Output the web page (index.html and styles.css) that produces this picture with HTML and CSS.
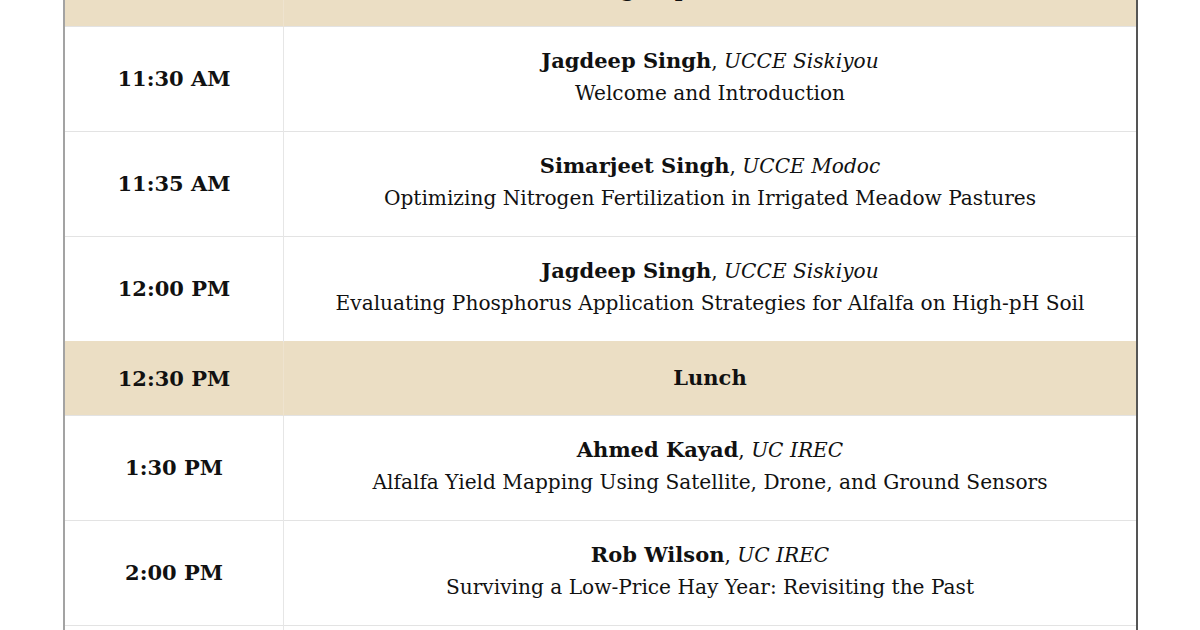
FILE: index.html
```html
<!DOCTYPE html>
<html lang="en">
<head>
<meta charset="utf-8">
<title>Agenda</title>
<link rel="stylesheet" href="styles.css">
</head>
<body>
<div class="page">
  <table class="agenda">
    <tbody>
      <tr class="break first">
        <td class="time"></td>
        <td class="talk"><strong>Sign-up and Coffee</strong></td>
      </tr>
      <tr>
        <td class="time">11:30 AM</td>
        <td class="talk"><strong>Jagdeep Singh</strong>, <em>UCCE Siskiyou</em><br>Welcome and Introduction</td>
      </tr>
      <tr>
        <td class="time">11:35 AM</td>
        <td class="talk"><strong>Simarjeet Singh</strong>, <em>UCCE Modoc</em><br>Optimizing Nitrogen Fertilization in Irrigated Meadow Pastures</td>
      </tr>
      <tr>
        <td class="time">12:00 PM</td>
        <td class="talk"><strong>Jagdeep Singh</strong>, <em>UCCE Siskiyou</em><br>Evaluating Phosphorus Application Strategies for Alfalfa on High-pH Soil</td>
      </tr>
      <tr class="break">
        <td class="time">12:30 PM</td>
        <td class="talk"><strong>Lunch</strong></td>
      </tr>
      <tr>
        <td class="time">1:30 PM</td>
        <td class="talk"><strong>Ahmed Kayad</strong>, <em>UC IREC</em><br>Alfalfa Yield Mapping Using Satellite, Drone, and Ground Sensors</td>
      </tr>
      <tr>
        <td class="time">2:00 PM</td>
        <td class="talk"><strong>Rob Wilson</strong>, <em>UC IREC</em><br>Surviving a Low-Price Hay Year: Revisiting the Past</td>
      </tr>
      <tr>
        <td class="time">2:30 PM</td>
        <td class="talk"><strong>Panel Discussion</strong>, <em>All Speakers</em><br>Questions and Answers</td>
      </tr>
    </tbody>
  </table>
</div>
</body>
</html>
```

FILE: styles.css
```css
html, body {
  margin: 0;
  padding: 0;
  background: #ffffff;
}

body {
  font-family: "DejaVu Serif", Georgia, serif;
  color: #111111;
  overflow: hidden;
}

.page {
  padding: 0 62px 0 63px;
  margin-top: -48px;
}

.agenda {
  width: 100%;
  border-collapse: collapse;
  border-left: 2px solid #a3a3a3;
  border-right: 2px solid #555555;
  font-size: 20.15px;
  line-height: 31.5px;
}

.agenda td {
  height: 64px;
  padding: 20px 12px;
  text-align: center;
  vertical-align: middle;
  border-top: 1px solid #e3e3e3;
  box-sizing: content-box;
}

.agenda td.talk {
  padding-top: 18px;
  padding-bottom: 22px;
}

.agenda tr.break td {
  height: 33px;
  padding-top: 20px;
  padding-bottom: 20px;
  background: #ebdec4;
  border-top-color: #ebdec4;
}

.agenda tr.first td.talk {
  padding-top: 21px;
  padding-bottom: 19px;
}

.agenda .time {
  width: 194px;
  font-weight: bold;
  font-size: 21px;
  border-right: 1px solid #e6e6e6;
}

.agenda strong {
  font-weight: bold;
  font-size: 21px;
}

.agenda em {
  font-style: italic;
}

.agenda tr.break .time {
  border-right-color: #eee3cf;
}
```
